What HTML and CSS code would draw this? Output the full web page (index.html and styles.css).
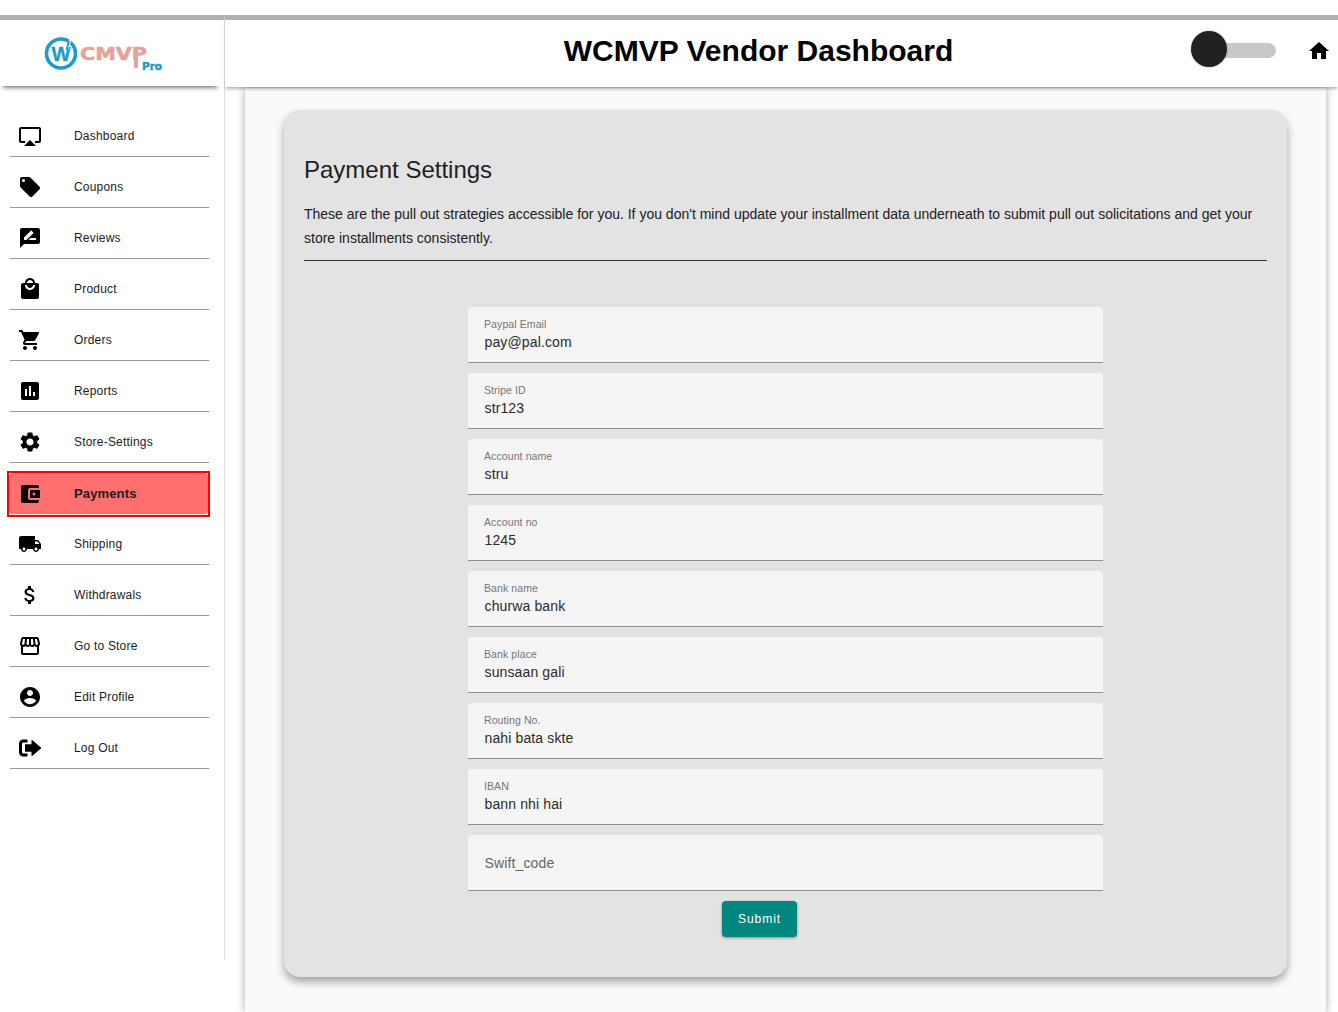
FILE: index.html
```html
<!DOCTYPE html>
<html lang="en">
<head>
<meta charset="utf-8">
<title>WCMVP Vendor Dashboard</title>
<link rel="stylesheet" href="styles.css">
</head>
<body>
<div class="shell">
  <aside class="sidebar">
    <div class="brand">
      <svg class="logo" viewBox="0 0 120 36" width="120" height="36" aria-label="WCMVP Pro">
        <circle cx="16" cy="17.5" r="14.5" fill="none" stroke="#1b9ccb" stroke-width="3.6"/>
        <text x="6.5" y="25" class="logo-w" textLength="19" lengthAdjust="spacingAndGlyphs">W</text>
        <path d="M26 2 L22 13" stroke="#fff" stroke-width="2.4"/>
        <path d="M24 5 L21.5 14" stroke="#1b9ccb" stroke-width="2"/>
        <text x="35" y="23.5" class="logo-cmvp" textLength="67" lengthAdjust="spacingAndGlyphs">CMVP</text>
        <rect x="89" y="13" width="4" height="19" fill="#e8a19b"/>
        <text x="97" y="34" class="logo-pro" textLength="20" lengthAdjust="spacingAndGlyphs">Pro</text>
      </svg>
    </div>
    <nav class="menu">
      <a class="item"><svg class="ico" viewBox="0 0 24 24"><path d="M6 22h12l-6-6zM21 3H3c-1.1 0-2 .9-2 2v12c0 1.1.9 2 2 2h4v-2H3V5h18v12h-4v2h4c1.1 0 2-.9 2-2V5c0-1.1-.9-2-2-2z"/></svg><span>Dashboard</span></a>
      <a class="item"><svg class="ico" viewBox="0 0 24 24"><path d="M21.41 11.58l-9-9C12.05 2.22 11.55 2 11 2H4c-1.1 0-2 .9-2 2v7c0 .55.22 1.05.59 1.42l9 9c.36.36.86.58 1.41.58.55 0 1.05-.22 1.41-.59l7-7c.37-.36.59-.86.59-1.41 0-.55-.23-1.06-.59-1.42zM5.5 7C4.67 7 4 6.33 4 5.5S4.67 4 5.5 4 7 4.67 7 5.5 6.33 7 5.5 7z"/></svg><span>Coupons</span></a>
      <a class="item"><svg class="ico" viewBox="0 0 24 24"><path d="M20 2H4c-1.1 0-2 .9-2 2v18l4-4h14c1.1 0 2-.9 2-2V4c0-1.1-.9-2-2-2zM6 14v-2.47l6.88-6.88c.2-.2.51-.2.71 0l1.77 1.77c.2.2.2.51 0 .71L8.47 14H6zm12 0h-7.5l2-2H18v2z"/></svg><span>Reviews</span></a>
      <a class="item"><svg class="ico" viewBox="0 0 24 24"><path d="M19 6h-2c0-2.76-2.24-5-5-5S7 3.24 7 6H5c-1.1 0-1.99.9-1.99 2L3 20c0 1.1.9 2 2 2h14c1.1 0 2-.9 2-2V8c0-1.1-.9-2-2-2zm-7-3c1.66 0 3 1.34 3 3H9c0-1.66 1.34-3 3-3zm0 10c-2.76 0-5-2.24-5-5h2c0 1.66 1.34 3 3 3s3-1.34 3-3h2c0 2.76-2.24 5-5 5z"/></svg><span>Product</span></a>
      <a class="item"><svg class="ico" viewBox="0 0 24 24"><path d="M7 18c-1.1 0-1.99.9-1.99 2S5.9 22 7 22s2-.9 2-2-.9-2-2-2zM1 2v2h2l3.6 7.59-1.35 2.45c-.16.28-.25.61-.25.96 0 1.1.9 2 2 2h12v-2H7.42c-.14 0-.25-.11-.25-.25l.03-.12.9-1.63h7.45c.75 0 1.41-.41 1.75-1.03l3.58-6.49c.08-.14.12-.31.12-.48 0-.55-.45-1-1-1H5.21l-.94-2H1zm16 16c-1.1 0-1.99.9-1.99 2s.89 2 1.99 2 2-.9 2-2-.9-2-2-2z"/></svg><span>Orders</span></a>
      <a class="item"><svg class="ico" viewBox="0 0 24 24"><path d="M19 3H5c-1.1 0-2 .9-2 2v14c0 1.1.9 2 2 2h14c1.1 0 2-.9 2-2V5c0-1.1-.9-2-2-2zM9 17H7v-7h2v7zm4 0h-2V7h2v10zm4 0h-2v-4h2v4z"/></svg><span>Reports</span></a>
      <a class="item"><svg class="ico" viewBox="0 0 24 24"><path d="M19.14 12.94c.04-.3.06-.61.06-.94 0-.32-.02-.64-.07-.94l2.03-1.58c.18-.14.23-.41.12-.61l-1.92-3.32c-.12-.22-.37-.29-.59-.22l-2.39.96c-.5-.38-1.03-.7-1.62-.94l-.36-2.54c-.04-.24-.24-.41-.48-.41h-3.84c-.24 0-.43.17-.47.41l-.36 2.54c-.59.24-1.13.57-1.62.94l-2.39-.96c-.22-.08-.47 0-.59.22L2.74 8.87c-.12.21-.08.47.12.61l2.03 1.58c-.05.3-.09.63-.09.94s.02.64.07.94l-2.03 1.58c-.18.14-.23.41-.12.61l1.92 3.32c.12.22.37.29.59.22l2.39-.96c.5.38 1.03.7 1.62.94l.36 2.54c.05.24.24.41.48.41h3.84c.24 0 .44-.17.47-.41l.36-2.54c.59-.24 1.13-.56 1.62-.94l2.39.96c.22.08.47 0 .59-.22l1.92-3.32c.12-.22.07-.47-.12-.61l-2.01-1.58zM12 15.6c-1.98 0-3.6-1.62-3.6-3.6s1.62-3.6 3.6-3.6 3.6 1.62 3.6 3.6-1.62 3.6-3.6 3.6z"/></svg><span>Store-Settings</span></a>
      <a class="item active"><svg class="ico" viewBox="0 0 24 24"><path d="M21 18v1c0 1.1-.9 2-2 2H5c-1.11 0-2-.9-2-2V5c0-1.1.89-2 2-2h14c1.1 0 2 .9 2 2v1h-9c-1.11 0-2 .9-2 2v8c0 1.1.89 2 2 2h9zm-9-2h10V8H12v8zm4-2.5c-.83 0-1.5-.67-1.5-1.5s.67-1.5 1.5-1.5 1.5.67 1.5 1.5-.67 1.5-1.5 1.5z"/></svg><span>Payments</span></a>
      <a class="item after-active"><svg class="ico" viewBox="0 0 24 24"><path d="M20 8h-3V4H3c-1.1 0-2 .9-2 2v11h2c0 1.66 1.34 3 3 3s3-1.34 3-3h6c0 1.66 1.34 3 3 3s3-1.34 3-3h2v-5l-3-4zM6 18.5c-.83 0-1.5-.67-1.5-1.5s.67-1.5 1.5-1.5 1.5.67 1.5 1.5-.67 1.5-1.5 1.5zm13.5-9l1.96 2.5H17V9.5h2.5zm-1.5 9c-.83 0-1.5-.67-1.5-1.5s.67-1.5 1.5-1.5 1.5.67 1.5 1.5-.67 1.5-1.5 1.5z"/></svg><span>Shipping</span></a>
      <a class="item"><svg class="ico" viewBox="0 0 24 24"><path d="M11.8 10.9c-2.27-.59-3-1.2-3-2.15 0-1.09 1.01-1.85 2.7-1.85 1.78 0 2.44.85 2.5 2.1h2.21c-.07-1.72-1.12-3.3-3.21-3.81V3h-3v2.16c-1.94.42-3.5 1.68-3.5 3.61 0 2.31 1.91 3.46 4.7 4.13 2.5.6 3 1.48 3 2.41 0 .69-.49 1.79-2.7 1.79-2.06 0-2.87-.92-2.98-2.1h-2.2c.12 2.19 1.76 3.42 3.68 3.83V21h3v-2.15c1.95-.37 3.5-1.5 3.5-3.55 0-2.84-2.43-3.81-4.7-4.4z"/></svg><span>Withdrawals</span></a>
      <a class="item"><svg class="ico" viewBox="0 0 24 24"><path d="M21.9 8.89l-1.05-4.37c-.22-.9-1-1.52-1.91-1.52H5.05c-.9 0-1.69.63-1.9 1.52L2.1 8.89c-.24 1.02-.02 2.06.62 2.88.08.11.19.19.28.29V19c0 1.1.9 2 2 2h14c1.1 0 2-.9 2-2v-6.94c.09-.09.2-.18.28-.28.64-.82.87-1.87.62-2.89zm-2.99-3.9l1.05 4.37c.1.42.01.84-.25 1.17-.14.18-.44.47-.94.47-.61 0-1.14-.49-1.21-1.14L16.98 5l1.93-.01zM13 5h1.96l.54 4.52c.05.39-.07.78-.33 1.07-.22.26-.54.41-.95.41-.67 0-1.22-.59-1.22-1.31V5zM8.49 9.52L9.04 5H11v4.69c0 .72-.55 1.31-1.29 1.31-.34 0-.65-.15-.89-.41-.25-.29-.37-.68-.33-1.07zm-4.45-.16L5.05 5h1.97l-.58 4.86c-.08.65-.6 1.14-1.21 1.14-.49 0-.8-.29-.93-.47-.27-.32-.36-.75-.26-1.17zM5 19v-6.03c.08.01.15.03.23.03.87 0 1.66-.36 2.24-.95.6.6 1.4.95 2.31.95.87 0 1.65-.36 2.23-.93.59.57 1.39.93 2.29.93.84 0 1.64-.35 2.24-.95.58.59 1.37.95 2.24.95.08 0 .15-.02.23-.03V19H5z"/></svg><span>Go to Store</span></a>
      <a class="item"><svg class="ico" viewBox="0 0 24 24"><path d="M12 2C6.48 2 2 6.48 2 12s4.48 10 10 10 10-4.48 10-10S17.52 2 12 2zm0 3c1.66 0 3 1.34 3 3s-1.34 3-3 3-3-1.34-3-3 1.34-3 3-3zm0 14.2c-2.5 0-4.71-1.28-6-3.22.03-1.99 4-3.08 6-3.08 1.99 0 5.97 1.09 6 3.08-1.29 1.94-3.5 3.22-6 3.22z"/></svg><span>Edit Profile</span></a>
      <a class="item"><svg class="ico" viewBox="0 0 24 24"><path d="M9.5 3.5H5C2.7 3.5 1 5.2 1 7.5v9c0 2.3 1.7 4 4 4h4.5v-3H5.6c-.9 0-1.6-.7-1.6-1.5V8c0-.8.7-1.5 1.6-1.5h3.9zM13.5 3.5V8.2H7v7.6h6.5v4.7L23.5 12z"/></svg><span>Log Out</span></a>
    </nav>
  </aside>
  <div class="main">
    <header class="topbar">
      <h1 class="title">WCMVP Vendor Dashboard</h1>
      <div class="switch"><span class="thumb"></span></div>
      <svg class="home" viewBox="0 0 24 24"><path d="M10 20v-6h4v6h5v-8h3L12 3 2 12h3v8z"/></svg>
    </header>
    <section class="panel">
      <div class="card">
        <h2 class="heading">Payment Settings</h2>
        <p class="intro">These are the pull out strategies accessible for you. If you don't mind update your installment data underneath to submit pull out solicitations and get your store installments consistently.</p>
        <hr class="rule">
        <form class="form">
          <div class="field"><div class="label">Paypal Email</div><div class="value">pay@pal.com</div></div>
          <div class="field"><div class="label">Stripe ID</div><div class="value">str123</div></div>
          <div class="field"><div class="label">Account name</div><div class="value">stru</div></div>
          <div class="field"><div class="label">Account no</div><div class="value">1245</div></div>
          <div class="field"><div class="label">Bank name</div><div class="value">churwa bank</div></div>
          <div class="field"><div class="label">Bank place</div><div class="value">sunsaan gali</div></div>
          <div class="field"><div class="label">Routing No.</div><div class="value">nahi bata skte</div></div>
          <div class="field"><div class="label">IBAN</div><div class="value">bann nhi hai</div></div>
          <div class="field empty"><div class="placeholder">Swift_code</div></div>
          <button class="submit" type="button">Submit</button>
        </form>
      </div>
    </section>
  </div>
</div>
</body>
</html>
```

FILE: styles.css
```css
* { box-sizing: border-box; }
html, body { margin: 0; padding: 0; height: 1012px; overflow: hidden; background: #fff; }
body { font-family: "Liberation Sans", Arial, sans-serif; color: #212121; padding-top: 15px; }

.shell { display: flex; align-items: flex-start; }

.sidebar {
  width: 225px;
  height: 945px;
  flex: none;
  border-top: 5px solid #b0b0b0;
  border-right: 1px solid #dcdcdc;
}
.brand {
  height: 66px;
  margin-right: 4px;
  padding: 14px 0 0 45px;
  box-shadow: 0 5px 4px -3px rgba(0,0,0,.5);
}
.logo { display: block; overflow: visible; margin-top: 2px; }
.logo-w { font: 700 20px "Liberation Sans", sans-serif; fill: #1b9ccb; stroke: #1b9ccb; stroke-width: .3; }
.logo-cmvp { font: 700 17px "DejaVu Sans", sans-serif; fill: #e8a19b; stroke: #e8a19b; stroke-width: .5; }
.logo-pro { font: 700 10.5px "DejaVu Sans", sans-serif; fill: #1b9ccb; stroke: #1b9ccb; stroke-width: .5; }

.menu { padding: 20px 15px 0 10px; }
.item {
  display: flex;
  align-items: center;
  height: 51px;
  padding: 18px 0 8px 8px;
  border-bottom: 1px solid #999;
  font-size: 12px;
  letter-spacing: .2px;
  color: #1c1c1c;
}
.ico { width: 24px; height: 24px; flex: none; margin-right: 32px; fill: #000; }
.item.active {
  position: relative;
  height: 42px;
  margin: 10px 1px 2px -1px;
  padding: 0 0 0 9px;
  border: 0;
  border-radius: 4px;
  border-bottom: 1px solid #e6e6e6;
  background: #ff6f6f;
  font-weight: 700;
  font-size: 13px;
  letter-spacing: .01071em;
}
.item.active::after {
  content: "";
  position: absolute;
  inset: -2px -2px -3px;
  border: 2px solid #f00;
}
.item.after-active { height: 48px; padding-top: 15px; }

.main { flex: 1; min-width: 0; }
.topbar {
  display: flex;
  align-items: center;
  height: 72px;
  border-top: 5px solid #b0b0b0;
  padding: 0 7px 6px 0;
  background: #fff;
  position: relative;
  box-shadow: 0 3px 3px -1px rgba(0,0,0,.3);
}
.title {
  flex: 1;
  margin: 0;
  padding-left: 83px;
  text-align: center;
  font-size: 30px;
  font-weight: 700;
  color: #000;
}
.switch {
  position: relative;
  width: 67px;
  height: 15px;
  margin-right: 31px;
  background: #c8c8c8;
  border-radius: 8px;
}
.thumb {
  position: absolute;
  left: -18px;
  top: -12px;
  width: 36px;
  height: 36px;
  border-radius: 50%;
  background: #212121;
  box-shadow: 0 0 2px rgba(0,0,0,.35);
}
.home { width: 24px; height: 24px; flex: none; fill: #000; }

.panel {
  margin: 1px 12px 0 20px;
  height: 924px;
  padding: 22px 39px 0;
  background: #fafafa;
  box-shadow: 0 0 8px rgba(0,0,0,.35);
}
.card {
  height: 867px;
  padding: 20px;
  background: #e3e3e3;
  border-radius: 16px;
  box-shadow: 0 5px 8px rgba(0,0,0,.35);
}
.heading {
  margin: 26px 0 0;
  font-size: 24px;
  line-height: 28px;
  font-weight: 400;
  color: #212121;
}
.intro {
  margin: 18px 0 0;
  font-size: 14px;
  line-height: 24px;
  color: #212121;
}
.rule { margin: 10px 0 0; border: 0; border-top: 1px solid #333; }
.form {
  width: 635px;
  margin: 46px auto 0;
  display: flex;
  flex-direction: column;
  gap: 10px;
  align-items: flex-start;
}
.field {
  width: 100%;
  height: 56px;
  padding: 12px 16px 0;
  background: #f5f5f5;
  border-radius: 4px 4px 0 0;
  border-bottom: 1px solid #8f8f8f;
}
.label {
  height: 14px;
  font-size: 14px;
  line-height: 14px;
  letter-spacing: .00938em;
  color: #757575;
  transform: scale(.75);
  transform-origin: left top;
  white-space: nowrap;
}
.value { padding-left: .5px; font-size: 14px; line-height: 18px; letter-spacing: .00938em; color: #2b2b2b; }
.placeholder { padding-left: .5px; margin-top: -1px; font-size: 14px; line-height: 34px; letter-spacing: .00938em; color: #666; }
.submit {
  margin-left: 254px;
  width: 75px;
  height: 36px;
  padding: 0;
  border: 0;
  border-radius: 4px;
  background: #008780;
  color: #fff;
  font-family: inherit;
  font-size: 12px;
  letter-spacing: .08em;
  box-shadow: 0 1px 3px rgba(0,0,0,.4);
}
```
